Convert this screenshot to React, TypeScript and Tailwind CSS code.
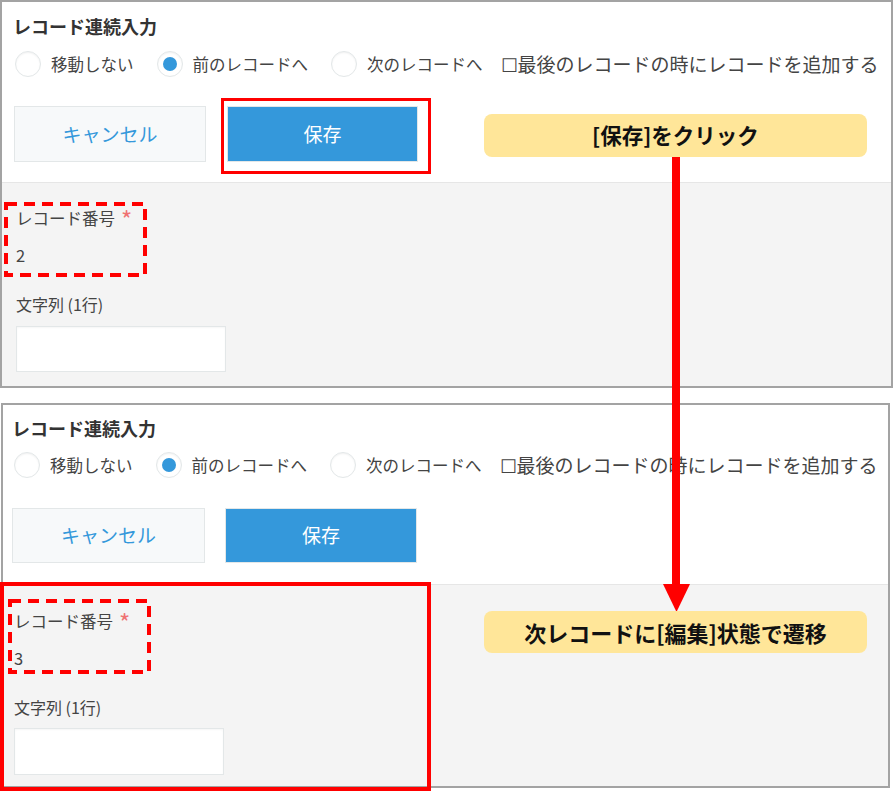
import React from 'react';

type PanelProps = {
  value: string;
  first?: boolean;
};

function Radio({ checked }: { checked?: boolean }) {
  return (
    <span className="flex h-[26px] w-[26px] shrink-0 items-center justify-center rounded-full border border-[#e3e7e8] bg-white shadow-[inset_0_1px_2px_rgba(0,0,0,0.06)]">
      {checked && <span className="h-[14px] w-[14px] rounded-full bg-[#3498db]" />}
    </span>
  );
}

function DashedBox({ className }: { className: string }) {
  return (
    <svg className={className} width="143" height="75" viewBox="0 0 143 75">
      <rect x="2" y="2" width="139" height="71" fill="none" stroke="#ff0000" strokeWidth="4" strokeDasharray="11 7" />
    </svg>
  );
}

function Panel({ value, first }: PanelProps) {
  return (
    <div
      className={
        first
          ? 'w-[893px] border-2 border-[#a3a3a3] bg-white'
          : 'ml-[1px] mt-[15px] w-[889px] border-2 border-[#a3a3a3] bg-white'
      }
    >
      <div className={first ? 'pl-[11px] pt-[14px]' : 'pl-[9px] pt-[13px]'}>
        <h1 className="text-[18px] font-bold leading-[20px] text-[#333]">レコード連続入力</h1>

        <div
          className={
            first
              ? 'ml-[2px] mt-[15px] flex items-center text-[#444]'
              : 'ml-[2px] mt-[14px] flex items-center text-[#444]'
          }
        >
          <Radio />
          <span className="ml-[10px] text-[16.5px] leading-[20px]">移動しない</span>
          <span className="ml-[23px]" />
          <Radio checked />
          <span className="ml-[10px] text-[16.5px] leading-[20px]">前のレコードへ</span>
          <span className="ml-[23px]" />
          <Radio />
          <span className="ml-[10px] text-[16.5px] leading-[20px]">次のレコードへ</span>
          <span className="ml-[18px] text-[19px] leading-[20px] text-[#444]">☐最後のレコードの時にレコードを追加する</span>
        </div>

        <div className={first ? 'ml-[1px] mt-[29px] flex gap-[21px]' : 'ml-[0px] mt-[30px] flex gap-[20px]'}>
          <button
            className={
              first
                ? 'h-[56px] w-[192px] border border-[#e3e7e8] bg-[#f7f9fa] text-[19px] text-[#3498db]'
                : 'h-[55px] w-[193px] border border-[#e3e7e8] bg-[#f7f9fa] text-[19px] text-[#3498db]'
            }
          >
            キャンセル
          </button>
          <button
            className={
              first
                ? 'h-[56px] w-[191px] border border-[#e3e7e8] bg-[#3498db] text-[19px] text-white'
                : 'h-[55px] w-[192px] border border-[#e3e7e8] bg-[#3498db] text-[19px] text-white'
            }
          >
            保存
          </button>
        </div>
      </div>

      <div
        className={
          first
            ? 'mt-[20px] border-t border-[#e6e6e6] bg-[#f4f4f4] pb-[14px] pl-[14px] pt-[25px] text-[#444]'
            : 'mt-[21px] border-t border-[#e6e6e6] bg-[#f4f4f4] pb-[11px] pl-[11px] pt-[26px] text-[#444]'
        }
      >
        <div className="flex h-[20px] items-center text-[16.5px] leading-[20px]">
          レコード番号
          <span className="ml-[6px] mt-[2px] text-[24px] leading-[20px] text-[#ef7272]">*</span>
        </div>
        <div className="mt-[17px] text-[16.5px] leading-[20px]">{value}</div>
        <div className="mt-[29px] text-[16px] leading-[20px]">文字列 (1行)</div>
        <div
          className={
            first
              ? 'mt-[12px] h-[46px] w-[210px] border border-[#e3e7e8] bg-white shadow-[inset_0_1px_2px_rgba(0,0,0,0.04)]'
              : 'mt-[11px] h-[47px] w-[210px] border border-[#e3e7e8] bg-white shadow-[inset_0_1px_2px_rgba(0,0,0,0.04)]'
          }
        />
      </div>
    </div>
  );
}

export default function App() {
  return (
    <div
      className="relative h-[791px] w-[895px] overflow-hidden bg-white"
      style={{ fontFamily: '"Noto Sans CJK JP", "Noto Sans", sans-serif' }}
    >
      <Panel value="2" first />
      <Panel value="3" />

      {/* annotations */}
      <div className="absolute left-[221px] top-[98px] h-[76px] w-[210px] border-[3px] border-[#ff0000]" />
      <DashedBox className="absolute left-[4px] top-[202px]" />
      <div className="absolute left-0 top-[582px] h-[209px] w-[431px] border-4 border-[#ff0000]" />
      <DashedBox className="absolute left-[8px] top-[599px]" />

      <div className="absolute left-[672px] top-[156px] h-[430px] w-[8px] bg-[#ff0000]" />
      <svg className="absolute left-[663px] top-[584px]" width="27" height="28" viewBox="0 0 27 28">
        <polygon points="0,0 27,0 13.5,28" fill="#ff0000" />
      </svg>

      <div className="absolute left-[484px] top-[114px] flex h-[43px] w-[383px] items-center justify-center rounded-lg bg-[#ffe699] text-[21.5px] font-bold text-[#111]">
        [保存]をクリック
      </div>
      <div className="absolute left-[484px] top-[611px] flex h-[42px] w-[383px] items-center justify-center rounded-lg bg-[#ffe699] text-[22px] font-bold text-[#111]">
        次レコードに[編集]状態で遷移
      </div>
    </div>
  );
}
